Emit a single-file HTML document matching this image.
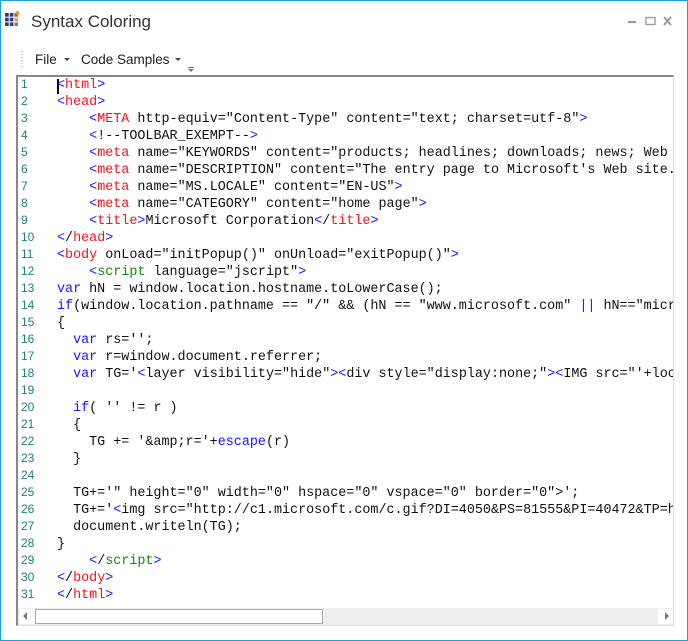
<!DOCTYPE html>
<html><head><style>
body{margin:0;width:688px;height:641px;overflow:hidden;background:#fff;font-family:"Liberation Sans",sans-serif}
.win{position:absolute;left:0;top:0;width:686px;height:639px;border:1px solid #1ba1e2;background:#fff}
.title{position:absolute;left:30px;top:11px;font-size:17px;color:#333}
.tb{position:absolute;top:51px;font-size:13.5px;color:#222}
.ed{position:absolute;left:15px;top:74px;width:655px;height:548px;border-top:2px solid #888;border-left:2px solid #888;border-right:1px solid #ddd;border-bottom:1px solid #ddd;overflow:hidden}
pre{margin:0;position:absolute;top:0px;left:0;font-family:"Liberation Mono",monospace;font-size:13.4px;line-height:17px;color:#111;white-space:pre}
.ln{position:absolute;left:3px;top:-1px;font-family:"Liberation Sans",sans-serif;font-size:12px;line-height:17px;color:#1a7f86}
.b{color:#1515ff}.r{color:#f0141e}.g{color:#108a10}
.sb{position:absolute;left:0;top:531px;width:655px;height:17px;background:#efefef}
</style></head><body><div class="win">
<svg style="position:absolute;left:4px;top:10px" width="15" height="15"><g fill="#2c3e78"><rect x="0" y="2" width="3.7" height="3.7"/><rect x="4.7" y="2" width="3.7" height="3.7"/><rect x="9.4" y="2" width="3.7" height="3.7" fill="#5a6aa0"/><rect x="0" y="6.7" width="3.7" height="3.7"/><rect x="4.7" y="6.7" width="3.7" height="3.7"/><rect x="9.4" y="6.7" width="3.7" height="3.7" fill="#f6a040"/><rect x="0" y="11.4" width="3.7" height="3.6"/><rect x="4.7" y="11.4" width="3.7" height="3.6"/><rect x="9.4" y="11.4" width="3.7" height="3.6" fill="#7080b0"/></g><circle cx="12.5" cy="2" r="2" fill="#f39020"/></svg>
<div class="title">Syntax Coloring</div>
<svg style="position:absolute;left:624px;top:15px" width="50" height="12"><rect x="3" y="5" width="8" height="2" fill="#999"/><rect x="21" y="1.5" width="9" height="7" fill="none" stroke="#999" stroke-width="1.3"/><path d="M39 1l7 8M46 1l-7 8" stroke="#999" stroke-width="2"/></svg>
<div style="position:absolute;left:20px;top:50px;width:2px;height:16px;background:repeating-linear-gradient(#d6b8d0 0 1px,transparent 1px 3px)"></div>
<div class="tb" style="left:34px">File</div>
<div style="position:absolute;left:63px;top:57px;border:3px solid transparent;border-top:3px solid #444"></div>
<div class="tb" style="left:80px">Code Samples</div>
<div style="position:absolute;left:174px;top:57px;border:3px solid transparent;border-top:3px solid #444"></div>
<div style="position:absolute;left:187px;top:66px;width:6px;height:1px;background:#777"></div>
<div style="position:absolute;left:187px;top:68px;border:3px solid transparent;border-top:3px solid #777"></div>
<div class="ed">
<div class="ln">1<br>2<br>3<br>4<br>5<br>6<br>7<br>8<br>9<br>10<br>11<br>12<br>13<br>14<br>15<br>16<br>17<br>18<br>19<br>20<br>21<br>22<br>23<br>24<br>25<br>26<br>27<br>28<br>29<br>30<br>31</div>
<div style="position:absolute;left:39px;top:2px;width:2px;height:15px;background:#000"></div>
<pre style="left:39px"><span class="b">&lt;</span><span class="r">html</span><span class="b">&gt;</span>
<span class="b">&lt;</span><span class="r">head</span><span class="b">&gt;</span>
    <span class="b">&lt;</span><span class="r">META</span> http-equiv="Content-Type" content="text; charset=utf-8"<span class="b">&gt;</span>
    <span class="b">&lt;</span>!--TOOLBAR_EXEMPT--<span class="b">&gt;</span>
    <span class="b">&lt;</span><span class="r">meta</span> name="KEYWORDS" content="products; headlines; downloads; news; Web site; what's new; solutions; services
    <span class="b">&lt;</span><span class="r">meta</span> name="DESCRIPTION" content="The entry page to Microsoft's Web site. Find software, solutions
    <span class="b">&lt;</span><span class="r">meta</span> name="MS.LOCALE" content="EN-US"<span class="b">&gt;</span>
    <span class="b">&lt;</span><span class="r">meta</span> name="CATEGORY" content="home page"<span class="b">&gt;</span>
    <span class="b">&lt;</span><span class="r">title</span><span class="b">&gt;</span>Microsoft Corporation<span class="b">&lt;</span>/<span class="r">title</span><span class="b">&gt;</span>
<span class="b">&lt;</span>/<span class="r">head</span><span class="b">&gt;</span>
<span class="b">&lt;</span><span class="r">body</span> onLoad="initPopup()" onUnload="exitPopup()"<span class="b">&gt;</span>
    <span class="b">&lt;</span><span class="g">script</span> language="jscript"<span class="b">&gt;</span>
<span class="b">var</span> hN = window.location.hostname.toLowerCase();
<span class="b">if</span>(window.location.pathname == "/" &amp;&amp; (hN == "www.microsoft.com" <span class="b">||</span> hN=="microsoft.com"))
{
  <span class="b">var</span> rs='';
  <span class="b">var</span> r=window.document.referrer;
  <span class="b">var</span> TG='<span class="b">&lt;</span>layer visibility="hide"<span class="b">&gt;&lt;</span>div style="display:none;"<span class="b">&gt;&lt;</span>IMG src="'+location.protocol
  
  <span class="b">if</span>( '' != r )
  {
    TG += '&amp;amp;r='+<span class="b">escape</span>(r)
  }

  TG+='" height="0" width="0" hspace="0" vspace="0" border="0"&gt;';
  TG+='<span class="b">&lt;</span>img src="http://c1.microsoft.com/c.gif?DI=4050&amp;PS=81555&amp;PI=40472&amp;TP=http://
  document.writeln(TG);
}
    <span class="b">&lt;</span>/<span class="g">script</span><span class="b">&gt;</span>
<span class="b">&lt;</span>/<span class="r">body</span><span class="b">&gt;</span>
<span class="b">&lt;</span>/<span class="r">html</span><span class="b">&gt;</span></pre>
<div class="sb">
<div style="position:absolute;left:1px;top:1px;width:15px;height:15px;background:#fff"></div>
<div style="position:absolute;left:5px;top:4px;border:4px solid transparent;border-right:4px solid #777;border-left:0"></div>
<div style="position:absolute;left:17px;top:1px;width:286px;height:13px;border:1px solid #aaa;background:#fff"></div>
<div style="position:absolute;left:640px;top:1px;width:15px;height:15px;background:#fff"></div>
<div style="position:absolute;left:647px;top:4px;border:4px solid transparent;border-left:4px solid #777;border-right:0"></div>
</div>
</div>
</div></body></html>
